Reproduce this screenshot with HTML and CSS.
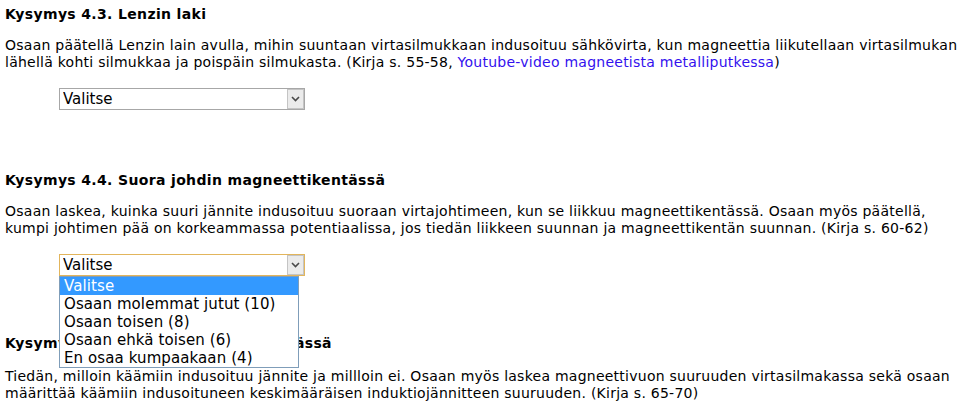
FILE: index.html
```html
<!DOCTYPE html>
<html lang="fi">
<head>
<meta charset="utf-8">
<title>Kysymykset</title>
<link rel="stylesheet" href="styles.css">
</head>
<body>
<div class="question">
  <h3 class="q-title">Kysymys 4.3. Lenzin laki</h3>
  <p class="q-text">Osaan päätellä Lenzin lain avulla, mihin suuntaan virtasilmukkaan indusoituu sähkövirta, kun magneettia liikutellaan virtasilmukan lähellä kohti silmukkaa ja poispäin silmukasta. (Kirja s. 55-58, <a class="q-link" href="#">Youtube-video magneetista metalliputkessa</a>)</p>
  <div class="answer">
    <div class="select-wrap">
      <select class="answer-select">
        <option>Valitse</option>
        <option>Osaan molemmat jutut (10)</option>
        <option>Osaan toisen (8)</option>
        <option>Osaan ehkä toisen (6)</option>
        <option>En osaa kumpaakaan (4)</option>
      </select>
      <span class="select-btn"><svg width="9" height="6" viewBox="0 0 9 6"><path d="M1 1l3.5 3.5L8 1" fill="none" stroke="#4a4a4a" stroke-width="1.6"/></svg></span>
    </div>
  </div>
</div>

<div class="question">
  <h3 class="q-title">Kysymys 4.4. Suora johdin magneettikentässä</h3>
  <p class="q-text">Osaan laskea, kuinka suuri jännite indusoituu suoraan virtajohtimeen, kun se liikkuu magneettikentässä. Osaan myös päätellä, kumpi johtimen pää on korkeammassa potentiaalissa, jos tiedän liikkeen suunnan ja magneettikentän suunnan. (Kirja s. 60-62)</p>
  <div class="answer answer--open">
    <div class="select-wrap is-open">
      <select class="answer-select">
        <option>Valitse</option>
        <option>Osaan molemmat jutut (10)</option>
        <option>Osaan toisen (8)</option>
        <option>Osaan ehkä toisen (6)</option>
        <option>En osaa kumpaakaan (4)</option>
      </select>
      <span class="select-btn"><svg width="9" height="6" viewBox="0 0 9 6"><path d="M1 1l3.5 3.5L8 1" fill="none" stroke="#4a4a4a" stroke-width="1.6"/></svg></span>
      <ul class="dropdown">
        <li class="dropdown-item is-active">Valitse</li>
        <li class="dropdown-item">Osaan molemmat jutut (10)</li>
        <li class="dropdown-item">Osaan toisen (8)</li>
        <li class="dropdown-item">Osaan ehkä toisen (6)</li>
        <li class="dropdown-item">En osaa kumpaakaan (4)</li>
      </ul>
    </div>
  </div>
</div>

<div class="question question--last">
  <h3 class="q-title">Kysymys 4.5. Käämi magneettikentässä</h3>
  <p class="q-text">Tiedän, milloin käämiin indusoituu jännite ja millloin ei. Osaan myös laskea magneettivuon suuruuden virtasilmakassa sekä osaan määrittää käämiin indusoituneen keskimääräisen induktiojännitteen suuruuden. (Kirja s. 65-70)</p>
</div>
</body>
</html>
```

FILE: styles.css
```css
html, body {
  margin: 0;
  padding: 0;
  background: #fff;
}

body {
  padding: 6px 0 0 5px;
  font-family: "DejaVu Sans", Verdana, sans-serif;
  font-size: 14px;
  line-height: 17px;
  color: #000;
}

.question {
  display: flex;
  flex-direction: column;
}

.q-title {
  margin: 0;
  font-size: 14px;
  font-weight: bold;
  line-height: 17px;
  letter-spacing: 0.35px;
}

.q-text {
  margin: 14px 0 0 0;
  letter-spacing: 0.25px;
}

.question--last .q-text {
  margin-top: 16px;
}

.q-link {
  color: #3311ee;
  text-decoration: none;
}

.answer {
  margin: 17px 0 62px 0;
  padding-left: 54px;
}

.answer--open {
  margin-bottom: 59px;
}

.select-wrap {
  position: relative;
  width: 246px;
  height: 22px;
}

.answer-select {
  appearance: none;
  -webkit-appearance: none;
  display: block;
  width: 246px;
  height: 22px;
  margin: 0;
  padding: 0 0 0 3px;
  border: 1px solid #a7a7a7;
  border-radius: 0;
  background: #fff;
  font-family: "DejaVu Sans", Verdana, sans-serif;
  font-size: 15px;
  color: #000;
}

.is-open .answer-select {
  border-color: #e2b55c;
}

.select-btn {
  position: absolute;
  top: 1px;
  right: 1px;
  width: 17px;
  height: 20px;
  box-sizing: border-box;
  border: 1px solid #c4c4c4;
  background: #ebebeb;
  display: flex;
  align-items: center;
  justify-content: center;
}

.dropdown {
  position: absolute;
  top: 22px;
  left: 0;
  width: 240px;
  box-sizing: border-box;
  margin: 0;
  padding: 0;
  list-style: none;
  border: 1px solid #7f9db9;
  background: #fff;
  z-index: 5;
}

.dropdown-item {
  height: 18px;
  line-height: 18px;
  padding-left: 4px;
  font-size: 15px;
  letter-spacing: 0.1px;
  white-space: nowrap;
}

.dropdown-item.is-active {
  background: #3399ff;
  color: #fff;
}
```
